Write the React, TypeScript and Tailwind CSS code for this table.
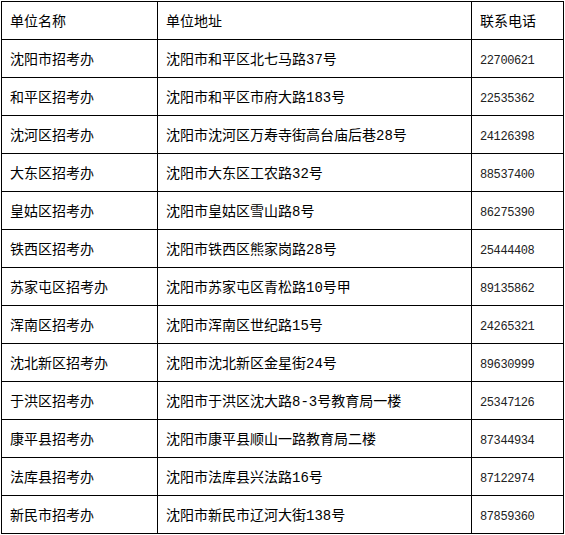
import React from "react"

const rows = [
    ["沈阳市招考办", "沈阳市和平区北七马路37号", "22700621"],
    ["和平区招考办", "沈阳市和平区市府大路183号", "22535362"],
    ["沈河区招考办", "沈阳市沈河区万寿寺街高台庙后巷28号", "24126398"],
    ["大东区招考办", "沈阳市大东区工农路32号", "88537400"],
    ["皇姑区招考办", "沈阳市皇姑区雪山路8号", "86275390"],
    ["铁西区招考办", "沈阳市铁西区熊家岗路28号", "25444408"],
    ["苏家屯区招考办", "沈阳市苏家屯区青松路10号甲", "89135862"],
    ["浑南区招考办", "沈阳市浑南区世纪路15号", "24265321"],
    ["沈北新区招考办", "沈阳市沈北新区金星街24号", "89630999"],
    ["于洪区招考办", "沈阳市于洪区沈大路8-3号教育局一楼", "25347126"],
    ["康平县招考办", "沈阳市康平县顺山一路教育局二楼", "87344934"],
    ["法库县招考办", "沈阳市法库县兴法路16号", "87122974"],
    ["新民市招考办", "沈阳市新民市辽河大街138号", "87859360"],
]

export default function App() {
    return (
        <div className="w-[565px] h-[535px] bg-white pt-px pl-px">
            <table
                className="border-collapse table-fixed w-[562px] text-[14px] text-black"
                style={{ fontFamily: '"Liberation Mono", "Noto Sans CJK SC", sans-serif' }}
            >
                <colgroup>
                    <col className="w-[156px]" />
                    <col className="w-[314px]" />
                    <col className="w-[92px]" />
                </colgroup>
                <thead>
                    <tr className="h-[38px]">
                        <th className="border border-black px-2 pt-1 text-left font-normal">单位名称</th>
                        <th className="border border-black px-2 pt-1 text-left font-normal">单位地址</th>
                        <th className="border border-black px-2 pt-1 text-left font-normal">联系电话</th>
                    </tr>
                </thead>
                <tbody>
                    {rows.map((r, i) => (
                        <tr key={i} className="h-[38px]">
                            <td className="border border-black px-2 pt-1">{r[0]}</td>
                            <td className="border border-black px-2 pt-1">{r[1]}</td>
                            <td className="border border-black px-2 pt-1 text-[12px] tracking-[-0.4px] text-[#222]">{r[2]}</td>
                        </tr>
                    ))}
                </tbody>
            </table>
        </div>
    )
}
